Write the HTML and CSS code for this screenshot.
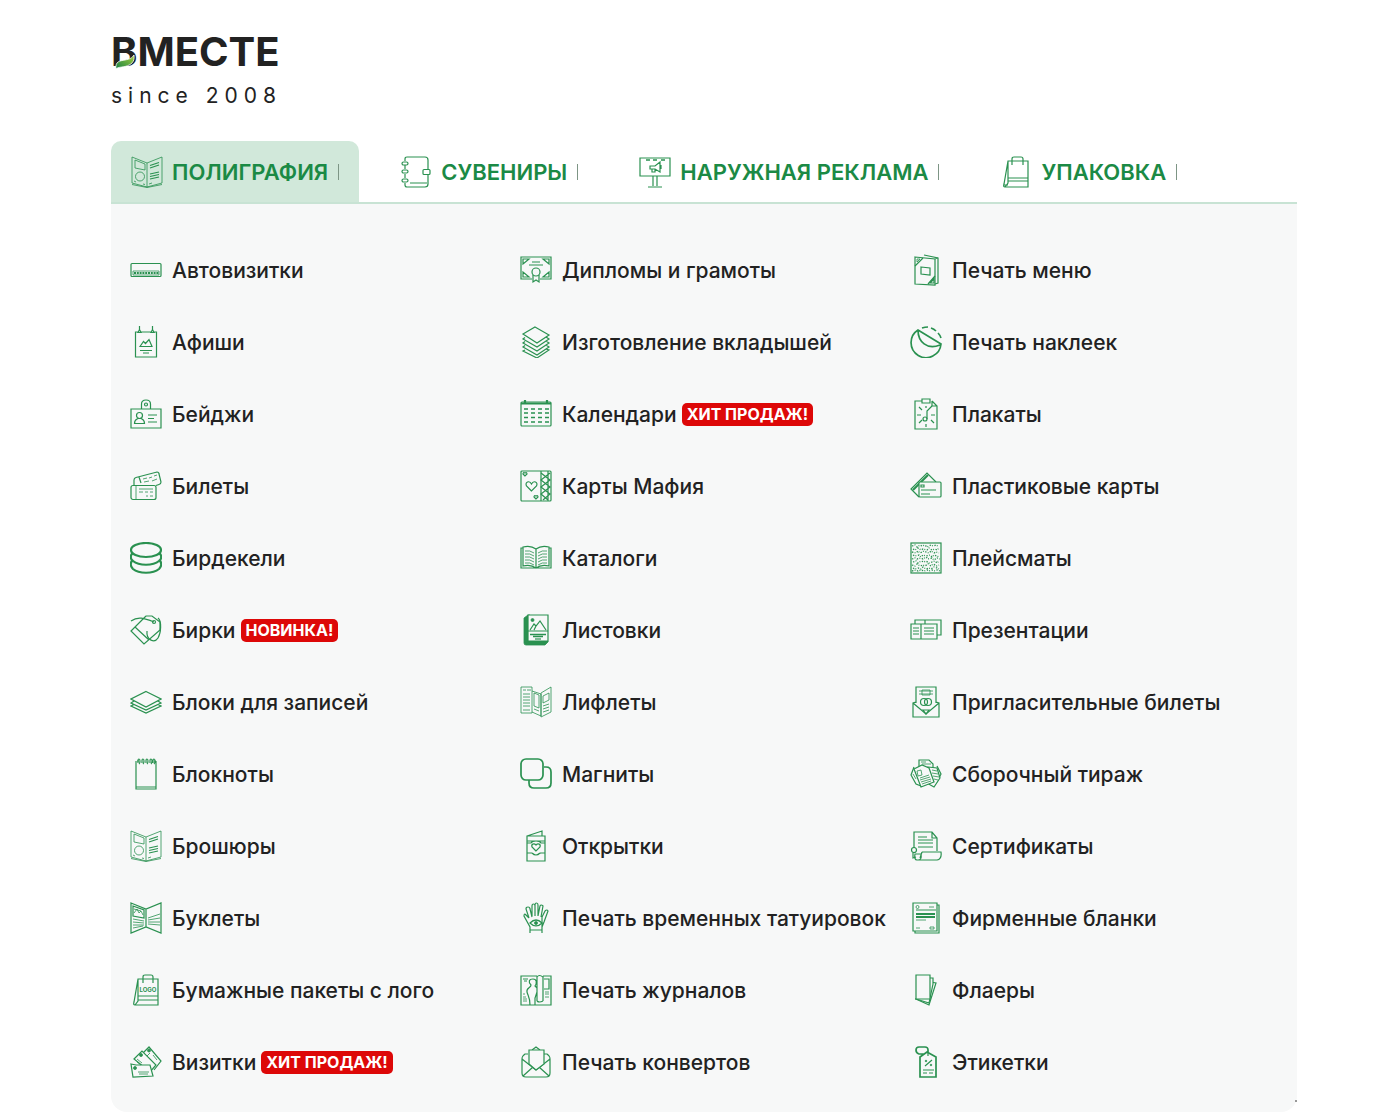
FILE: index.html
```
<!DOCTYPE html>
<html lang="ru">
<head>
  <meta charset="UTF-8">
  <title>ВМЕСТЕ</title>
  <meta name="viewport" content="width=device-width, initial-scale=1">
  <link rel="stylesheet" href="styles.css">
</head>
<body>

<svg class="sprite" aria-hidden="true">
  <symbol id="i-brochure" viewBox="0 0 32 32">
    <path d="M1 1l15 6 15-6v26l-15 4-15-4zM16 7v24M4 4l10 4v6L4 12zM1 28.500l15 3 15-3"/>
    <circle cx="9" cy="20.500" r="4.500"/>
    <path d="M3 25l2 1M12 28l2 .5M18 28l3-1"/>
    <path class="mid" d="M19 9.500l9-3M19 12l9-3M19 18l9-2M19 20.500l9-2M19 23l9-2"/>
  </symbol>
</svg>

<div class="page">
  <header class="header">
    <a class="logo" href="#">
      <span class="logo-name">ВМЕСТЕ
        <svg class="leaf" viewBox="0 0 20 14" aria-hidden="true">
          <defs>
            <linearGradient id="leafFill" x1="0" y1="1" x2="1" y2="0">
              <stop offset="0" stop-color="#168044"/>
              <stop offset="1" stop-color="#a5cf3c"/>
            </linearGradient>
          </defs>
          <path d="M1 14C0 6 5 6 10 5C15 4 17 3 19 0C20 7 16 10 10 11.500C5 12.500 3 12 1 14Z" fill="url(#leafFill)" stroke="#fff" stroke-width=".8"/>
        </svg>
      </span>
      <span class="logo-since">since 2008</span>
    </a>
  </header>

  <nav class="tabs">
    <a class="tab active" href="#">
      <svg class="icon" viewBox="0 0 32 32"><use href="#i-brochure"/></svg>
      <span class="tab-name">ПОЛИГРАФИЯ</span>
    </a>
    <a class="tab" href="#">
      <svg class="icon" viewBox="0 0 32 32"><path class="mid" d="M5 5V3q0-2 2-2h18q3 0 3 3v9M28 19v9q0 3-3 3H7q-2 0-2-2v-2M5 9v4M5 18v4M10 27h17"/><rect class="mid" x="2" y="6" width="6" height="3" rx="1.500"/><rect class="mid" x="2" y="14" width="6" height="3" rx="1.500"/><rect class="mid" x="2" y="23" width="6" height="3" rx="1.500"/><rect class="mid" x="23" y="13.500" width="7" height="5" rx="1"/></svg>
      <span class="tab-name">СУВЕНИРЫ</span>
    </a>
    <a class="tab" href="#">
      <svg class="icon" viewBox="0 0 32 32"><path class="mid" d="M1 2h30v18H1zM14 20v10M18 20v10M9 31h14"/><path class="bold" d="M7 4h4M14 4h4M22 4h4"/><path class="mid" d="M11 10h5l5-4v10l-5-3h-5zM13 13v3h3v-3M22 9v4"/></svg>
      <span class="tab-name">НАРУЖНАЯ РЕКЛАМА</span>
    </a>
    <a class="tab" href="#">
      <svg class="icon" viewBox="0 0 32 32"><path class="mid" d="M8 5h20v26H5q-2 0-1-3zM8 5v22l-3 4M8 22h20M8 25h20M12 9V3q0-2 2-2h7q2 0 2 2v6M4 29h4"/></svg>
      <span class="tab-name">УПАКОВКА</span>
    </a>
  </nav>

  <main class="panel">
    <ul class="menu">
      <li><a href="#"><svg class="icon" viewBox="0 0 32 32"><rect class="mid" x="1" y="9.500" width="30" height="13" rx="1"/><path d="M3 17h26v4H3z"/><path class="dots" d="M4 19h25"/></svg>Автовизитки</a></li>
      <li><a href="#"><svg class="icon" viewBox="0 0 32 32"><path class="mid" d="M8 6H5.500v25h21V6H24M11 6h10M9.500 0v4M22.500 0v4M8 6.500l1.500-3 1.500 3zM21 6.500l1.500-3 1.500 3zM10 20.500l3.500-5 2 2 3.500-4 3 7zM10 24.500h12M13 27h6"/></svg>Афиши</a></li>
      <li><a href="#"><svg class="icon" viewBox="0 0 32 32"><path class="mid" d="M1 11h30v19H1zM11.500 11V6q0-4 4.500-4t4.500 4v5M18 17h9M18 20.500h6M18 24h9M4.500 25.500c0-4 2-4 3.500-5h3c1.500 1 3.500 1 3.500 5z"/><circle class="mid" cx="16" cy="6.500" r="1.500"/><circle class="mid" cx="9.500" cy="17.500" r="3"/></svg>Бейджи</a></li>
      <li><a href="#"><svg class="icon" viewBox="0 0 32 32"><path class="mid" d="M4 15V10q0-2 2-2.500L27 2q2 0 2 2l2 8q0 2-2 2.500l-3 1M9 7l2 6"/><path d="M13 9l4-1M19 8l3-1M24 6l3-1M14 12l5-1M22 11l5-2"/><rect class="mid paper" x="1" y="15.500" width="25" height="14" rx="2"/><path d="M6 16v13M9 19h14M9 22h4M15 22h3M20 22h3M16 26h2M20 26h3"/></svg>Билеты</a></li>
      <li><a href="#"><svg class="icon" viewBox="0 0 32 32"><g class="heavy"><path class="paper" d="M3 18c-3 2-3 6 0 9 6 5 20 5 26 0 3-3 3-7 0-9"/><path class="paper" d="M3 11c-3 2-3 6 0 8 6 5 20 5 26 0 3-2 3-6 0-8"/><ellipse class="paper" cx="16" cy="8" rx="15" ry="7"/></g></svg>Бирдекели</a></li>
      <li><a href="#"><svg class="icon" viewBox="0 0 32 32"><path class="mid" d="M16 2h6l8 6v8L14 30 1 17 15 3zM5 13l14 13"/><circle class="mid" cx="24" cy="8" r="1.500"/><path class="mid" d="M1 7C8 2 14 4 24 8M28 4c4 3 3 15 0 20s-12 3-11-7"/></svg>Бирки<span class="badge">НОВИНКА!</span></a></li>
      <li><a href="#"><svg class="icon" viewBox="0 0 32 32"><path class="mid" d="M16 5.500l15 7.500-15 8L1 13zM4 15l-3 2 15 7 15-7-3-2M4 18.500l-3 1.500L16 27l15-7-3-1.500"/></svg>Блоки для записей</a></li>
      <li><a href="#"><svg class="icon" viewBox="0 0 32 32"><path class="mid" d="M6 3v28h20V3M6 29h20M7 3h2M24 3h2M8 5V3q0-2 1-2t1 2-1 3M12 5V3q0-2 1-2t1 2-1 3M16 5V3q0-2 1-2t1 2-1 3M20 5V3q0-2 1-2t1 2-1 3M23 5V3q0-2 1-2t1 2-1 3"/></svg>Блокноты</a></li>
      <li><a href="#"><svg class="icon" viewBox="0 0 32 32"><use href="#i-brochure"/></svg>Брошюры</a></li>
      <li><a href="#"><svg class="icon" viewBox="0 0 32 32"><path class="mid" d="M1 1l15 6 15-6v30l-15-6-15 6zM16 7v18M3 4l11 4v8L3 14z"/><path d="M4 11l3-4 2 4 2-2 2 4M3 17l11 2M3 20l11 1M3 23h11M3 26l10-2M18 16l12-4M18 18l12-2M18 20h12M18 22l12 1M4 7l7 2"/></svg>Буклеты</a></li>
      <li><a href="#"><svg class="icon" viewBox="0 0 32 32"><path class="mid" d="M8 5h20v26H5q-2 0-1-3zM8 5v22l-3 4M8 22h20M8 26h20M13 9V3q0-2 2-2h6q2 0 2 2v6"/><text x="18" y="17.500" class="icon-text">LOGO</text></svg>Бумажные пакеты с лого</a></li>
      <li><a href="#"><svg class="icon" viewBox="0 0 32 32"><path class="mid" d="M12 8l7-7 12 14-7 9"/><path class="mid paper" d="M4 13l8-8 14 14-6 7z"/><path class="mid paper" d="M1 18l5 1h14l3 11-20 1z"/><path d="M7 13l5 4M7 16l4 3M23 9l4 5M20 7l-3 3M8 26h11M9 28h9"/><circle class="fill" cx="11" cy="9" r="1.500"/><circle class="fill" cx="19" cy="4.500" r="1.500"/><circle class="fill" cx="5" cy="22" r="1.500"/></svg>Визитки<span class="badge">ХИТ ПРОДАЖ!</span></a></li>
    </ul>

    <ul class="menu">
      <li><a href="#"><svg class="icon" viewBox="0 0 32 32"><path class="mid" d="M12 25H1V3h30v22H20"/><path class="mid" d="M3 10V5h6zM29 10V5h-6zM3 18v5h6zM29 18v5h-6zM12 8h8M9 11h14M13 21v7l3-2 3 2v-7"/><circle class="mid" cx="16" cy="18" r="4"/></svg>Дипломы и грамоты</a></li>
      <li><a href="#"><svg class="icon" viewBox="0 0 32 32"><g class="mid"><path d="M5 24l-2 1 14 7 12-8-3-1M5 19.500L3 21l14 8 12-8-3-2M5 15.500L3 17l14 8 12-8-3-2M5 11.500L3 13l14 8 12-8-3-2"/><path class="paper" d="M15 1l14 8-12 8L3 8z"/></g></svg>Изготовление вкладышей</a></li>
      <li><a href="#"><svg class="icon" viewBox="0 0 32 32"><rect class="mid" x="1" y="4" width="30" height="24" rx="1"/><path class="heavy" d="M1 5.500h30M5 2v3M27 2v3"/><path class="bold dashes" d="M4 11h26M4 15h26M4 19.500h26M4 24h26"/></svg>Календари<span class="badge">ХИТ ПРОДАЖ!</span></a></li>
      <li><a href="#"><svg class="icon" viewBox="0 0 32 32"><rect class="mid" x="1" y="1" width="30" height="30" rx="1"/><path class="mid" d="M21 1v30M11.500 21l-5-5c-2-4 3-6 5-2 2-4 7-2 5 2zM5 6L3 4q0-2 2-1 2-1 2 1zM16 29l-2-2q0-2 2-1 2-1 2 1z"/><path class="mid" d="M21 3l9 7-9 7 9 7-7 6M30 3l-9 7 9 7-9 7 7 6M28 1v30"/></svg>Карты Мафия</a></li>
      <li><a href="#"><svg class="icon" viewBox="0 0 32 32"><path class="mid" d="M3 6H1v20h30V6h-2M16 7c-4-3-9-3-13-2v19c4-1 9-1 13 2 4-3 9-3 13-2V5c-4-1-9-1-13 2zM16 7v19"/><path d="M5 9q5-1 9 2M5 12q5-1 9 2M5 15q5-1 9 2M5 18q5-1 9 2M5 21q5-1 9 2M27 9q-5-1-9 2M27 12q-5-1-9 2M27 15q-5-1-9 2M27 18q-5-1-9 2M27 21q-5-1-9 2"/></svg>Каталоги</a></li>
      <li><a href="#"><svg class="icon" viewBox="0 0 32 32"><path class="fill" d="M4 4l4-3h2v26h18v1l-3 3H6q-2 0-2-2z"/><path class="mid paper" d="M8 1h20v26H8z"/><path class="mid" d="M8 17h20M10 16l4-6 2 2 4-5 6 9M14 16l2-4"/><circle class="fill" cx="12.500" cy="6" r="1.500"/><path class="bold" d="M10 20.500h16M13 22.500h10"/><path class="mid" d="M15 25h6"/></svg>Листовки</a></li>
      <li><a href="#"><svg class="icon" viewBox="0 0 32 32"><path d="M1 1h11v26H1zM12 5l9 3v22l-9-4M21 7l10-6v25l-10 5zM14 7l5 2v13l-5-2zM23 10l6-3v7l-6 3zM3 4h3M7 4h4M3 8h7M3 11h7M3 14h7M3 17h7M3 20h7M3 24h7M14 23l5 2M23 20l6-2M23 23l6-2M23 26l6-2"/></svg>Лифлеты</a></li>
      <li><a href="#"><svg class="icon" viewBox="0 0 32 32"><rect class="bold" x="1" y="1" width="22" height="21" rx="5"/><path class="bold" d="M24 9h2q5 0 5 5v11q0 5-5 5H14q-5 0-5-5v-3"/></svg>Магниты</a></li>
      <li><a href="#"><svg class="icon" viewBox="0 0 32 32"><path class="mid" d="M7 6h18v25H7zM7 6l15-5v5M7 11h18M7 23h5M20 23h5M7 13h4q1-2 5-2t5 2h4M12 23q2 2 4 2t4-2"/><path class="mid" d="M16 21l-4-4c-1-3 2-4 4-2 2-2 5-1 4 2z"/></svg>Открытки</a></li>
      <li><a href="#"><svg class="icon" viewBox="0 0 32 32"><path class="mid" d="M10 31V25L4 14q0-3 2-1l3 3M9 16L6 7q0-2 2-2t2 2l2 8M12 14V4q0-2 1.500-2T15 4v10M15 14V3q0-2 1.500-2T18 3v11M18 14l2-10q1-2 3 0l-2 11M22 15l3-6q2-2 3 0l-4 11-2 5v6zM10 28h12"/><path class="mid" d="M10 21q6-6 12 0-6 6-12 0z"/><circle class="fill" cx="16" cy="21" r="1.500"/></svg>Печать временных татуировок</a></li>
      <li><a href="#"><svg class="icon" viewBox="0 0 32 32"><path class="mid" d="M17 2H1v29h30V2h-8M17 27V3q2-3 6 0v24M17 27q2 2 6 0M24 5h5v10h-5M10 31c0-8-2-9-3-13s4-4 4-7c-3-3-2-6 2-6s4 4 2 7l2 2M17 18l-2 6v7M3 5h5M4 7h3"/><path d="M25 18h4M25 20h4M25 23h4M3 20h2M3 23h3M3 25h4M3 27h4"/></svg>Печать журналов</a></li>
      <li><a href="#"><svg class="icon" viewBox="0 0 32 32"><path class="mid" d="M8 8H5q-3 2-3 5v14q0 4 4 4h20q4 0 4-4V13q0-3-3-5h-3M2 13l14 11 14-11M3 30l10-9M29 30l-10-9M12 4l4-3 4 3"/><path class="mid paper" d="M9 18V4h15v14l-8 6z"/></svg>Печать конвертов</a></li>
    </ul>

    <ul class="menu">
      <li><a href="#"><svg class="icon" viewBox="0 0 32 32"><path class="mid paper" d="M14 1l14 3v25l-3 1"/><path class="mid paper" d="M5 3l20 2v26L5 30z"/><path class="mid" d="M5 12l8-8M11 13l9 1v7l-9-1zM18 30l7-8M20 29h4v-4z"/><path d="M7 8V5h3zM25 5l3-1"/></svg>Печать меню</a></li>
      <li><a href="#"><svg class="icon" viewBox="0 0 32 32"><path class="bold" d="M8 4A15 15 0 1 0 31 18zM8 4c0 12 9 20 22 15"/><path class="bold" d="M12 2q3-1 6-1M21 2q3 1 5 3M28 7q2 2 3 5"/></svg>Печать наклеек</a></li>
      <li><a href="#"><svg class="icon" viewBox="0 0 32 32"><path class="mid" d="M12 3H5v28h22V8l-5-5M12 1h8v4h-8zM22 3v5h5"/><path class="mid" d="M17 21v-8l5-5"/><circle class="mid" cx="15" cy="21" r="2"/><path class="mid" d="M16 8v2M9 9l3 3M7 17h4M9 25l3-3M16 26v3M24 25l-3-3M25 17h-4"/></svg>Плакаты</a></li>
      <li><a href="#"><svg class="icon" viewBox="0 0 32 32"><path class="mid" d="M9 27L1 19 17 3l9 9"/><path class="heavy" d="M3 20L18 5"/><rect class="mid paper" x="9" y="12" width="22" height="15" rx="1"/><path class="mid" d="M11 15h3v2h-3zM11 20h15M11 24h9"/></svg>Пластиковые карты</a></li>
      <li><a href="#"><svg class="icon" viewBox="0 0 32 32"><rect class="mid" x="1" y="1" width="30" height="30"/><path class="speckle" d="M2 4l3-1 2 2 3-2 2 1 3-1 2 2 4-2 2 1 3-1 3 2M3 7l2 1 3-2 3 2 2-1 4 1 2-2 3 2 3-1 2 1 2-2M2 10l4 1 2-2 2 2 4-2 2 1 3 1 2-2 3 2 2-1 3 1M3 13l2 1 4-1 2 2 2-2 3 1 4-1 2 2 2-2 3 1 2 1M2 17l3-1 2 1 4-1 2 1 3-2 2 2 4-1 2 2 3-2 3 1M3 20l3-1 2 2 3-2 3 1 2-1 3 2 3-1 3-1 2 2 2-2M2 23l3 1 2-2 3 2 3-1 2 1 3-2 3 2 2-2 4 2 2-1M3 26l2 1 3-1 3 1 2-2 3 2 3-1 2 1 3-2 3 1 2 1M2 29l4-1 2 1 3-1 3 1 3-1 2 1 3-1 3 1 2-1 3 1"/></svg>Плейсматы</a></li>
      <li><a href="#"><svg class="icon" viewBox="0 0 32 32"><path class="mid" d="M1 10h26v15H1zM11 10v15M5 10V6h26v15h-4M15 6v4M3 14h6M3 17h6M3 20h6M14 14h10M14 17h10M14 20h10"/></svg>Презентации</a></li>
      <li><a href="#"><svg class="icon" viewBox="0 0 32 32"><path class="mid" d="M6 17V1h20v16M6 16l-3 1v14h26V17l-3-1M3 17l13 11 13-11"/><path d="M9 5h14M9 8h14M12 4h8v5h-8z"/><circle class="mid" cx="14" cy="16" r="3.500"/><circle class="mid" cx="18" cy="16" r="3.500"/><path class="mid" d="M13 24h6l-3 4z"/></svg>Пригласительные билеты</a></li>
      <li><a href="#"><svg class="icon" viewBox="0 0 32 32"><g class="mid"><path d="M9 9V2h10l4 4v6"/><path class="paper" d="M4 9l-3 8 5 9 5 2M27 8l4 8-4 8-4 4"/><path class="paper" d="M18 9l9 1 3 10-6 9-9-5z"/><path class="paper" d="M4 11l8-4 7 3 5 14-13 5z"/></g><path d="M7 13l4-1 1 5-4 1zM10 20l9-3M10 22l10-3M11 24l10-3M12 26l9-3M11 4h5M12 6h9M22 12l5 1M22 15l6 1M23 18l6 1M24 21l4 1M3 16l3 5"/></svg>Сборочный тираж</a></li>
      <li><a href="#"><svg class="icon" viewBox="0 0 32 32"><path class="mid" d="M4 18V2h18l5 6v13M22 2v6h5M12 22h19q1 7-4 8H7q-3 0-2-6h6q1 6-3 6M12 22l-2 6"/><circle class="mid" cx="4" cy="20" r="2.500"/><path class="mid" d="M8 7h9M8 10h15M8 13h15M8 17h15M3 23v5l3-1"/></svg>Сертификаты</a></li>
      <li><a href="#"><svg class="icon" viewBox="0 0 32 32"><path class="mid" d="M3 1h24v28H3zM27 3h2v28H5v-2M6 8h20"/><path d="M19 5h5M6 26h4M20 25h4v2h-4zM6 18h10"/><path class="heavy" d="M6 12h19M6 15h19"/><circle cx="7.500" cy="5" r="1.500"/></svg>Фирменные бланки</a></li>
      <li><a href="#"><svg class="icon" viewBox="0 0 32 32"><path class="mid paper" d="M20 8l6 1-7 22-13-6z"/><path class="mid paper" d="M19 4h4v6l-4 19-13-4z"/><path class="mid paper" d="M6 1h14v24H6z"/></svg>Флаеры</a></li>
      <li><a href="#"><svg class="icon" viewBox="0 0 32 32"><path class="bold" d="M10 11l7-5 9 5v20H10zM18 7V4q0-3-3-3H9Q6 1 6 4t3 4h5"/><path class="mid" d="M15 20l7-6M18 6v4"/><circle class="fill" cx="16" cy="15" r=".8"/><circle class="fill" cx="21" cy="19" r=".8"/><path class="mid" d="M13 24h11M13 27h4M19 27h4"/></svg>Этикетки</a></li>
    </ul>
  </main>
</div>

</body>
</html>
```
FILE: styles.css
```
* {
  box-sizing: border-box;
}
body {
  margin: 0;
  background: #fff;
  color: #222;
  font-family: Inter, "Open Sans", sans-serif;
  font-size: 21px;
  font-weight: 500;
}
a {
  color: inherit;
  text-decoration: none;
}
.sprite {
  position: absolute;
  width: 0;
  height: 0;
}
.page {
  padding: 28px 103px 8px 111px;
}

/* logo */
.header {
  height: 113px;
}
.logo {
  display: inline-flex;
  flex-direction: column;
}
.logo-name {
  position: relative;
  font-size: 40px;
  font-weight: 700;
  line-height: 48px;
}
.leaf {
  position: absolute;
  left: 4px;
  bottom: 7px;
  width: 20px;
  height: 14px;
}
.logo-since {
  margin-top: 6px;
  font-size: 21px;
  font-weight: 400;
  line-height: 28px;
  letter-spacing: 6px;
}

/* tabs */
.tabs {
  display: flex;
  gap: 21px;
  border-bottom: 2px solid #c8e3d4;
}
.tab {
  display: flex;
  align-items: center;
  gap: 9px;
  height: 61px;
  padding: 0 20px;
  border-radius: 10px 10px 0 0;
  color: #1b8a45;
  font-size: 22px;
  font-weight: 600;
  white-space: nowrap;
}
.tab.active {
  background: #d1e8da;
}
.tab::after {
  content: "";
  width: 1px;
  height: 16px;
  margin-left: 1px;
  background: #7d9585;
}

/* menu */
.panel {
  position: relative;
  display: grid;
  grid-template-columns: repeat(3, 1fr);
  padding: 30px 16px 14px 0;
  border-radius: 0 0 16px 16px;
  background: #f7f8f8;
}
.panel::after {
  content: "";
  position: absolute;
  right: 0;
  bottom: 10px;
  width: 2px;
  height: 2px;
  background: #999;
}
.menu {
  margin: 0;
  padding: 0;
  list-style: none;
}
.menu a {
  display: flex;
  align-items: center;
  height: 72px;
  padding-left: 19px;
  white-space: nowrap;
}
.menu .icon {
  margin-right: 10px;
}
.badge {
  margin-left: 5px;
  padding: 0 5px;
  border-radius: 5px;
  background: #dd0808;
  color: #fff;
  font-size: 16px;
  font-weight: 700;
  line-height: 23px;
}

/* icons */
.icon {
  flex: none;
  width: 32px;
  height: 32px;
  fill: none;
  stroke: #2a9150;
  stroke-width: .8;
}
.mid {
  stroke-width: 1.2;
}
.bold {
  stroke-width: 1.7;
}
.heavy {
  stroke-width: 2.2;
}
.fill {
  fill: #2a9150;
}
.paper {
  fill: #f7f8f8;
}
.dots {
  stroke-width: 2;
  stroke-dasharray: 2 .8;
}
.dashes {
  stroke-dasharray: 4 3;
}
.speckle {
  stroke-width: 1.3;
  stroke-dasharray: 1.4 1.3 .9 1.6;
}
.icon-text {
  fill: #2a9150;
  stroke: none;
  font-size: 6px;
  font-weight: 700;
  text-anchor: middle;
}
```
